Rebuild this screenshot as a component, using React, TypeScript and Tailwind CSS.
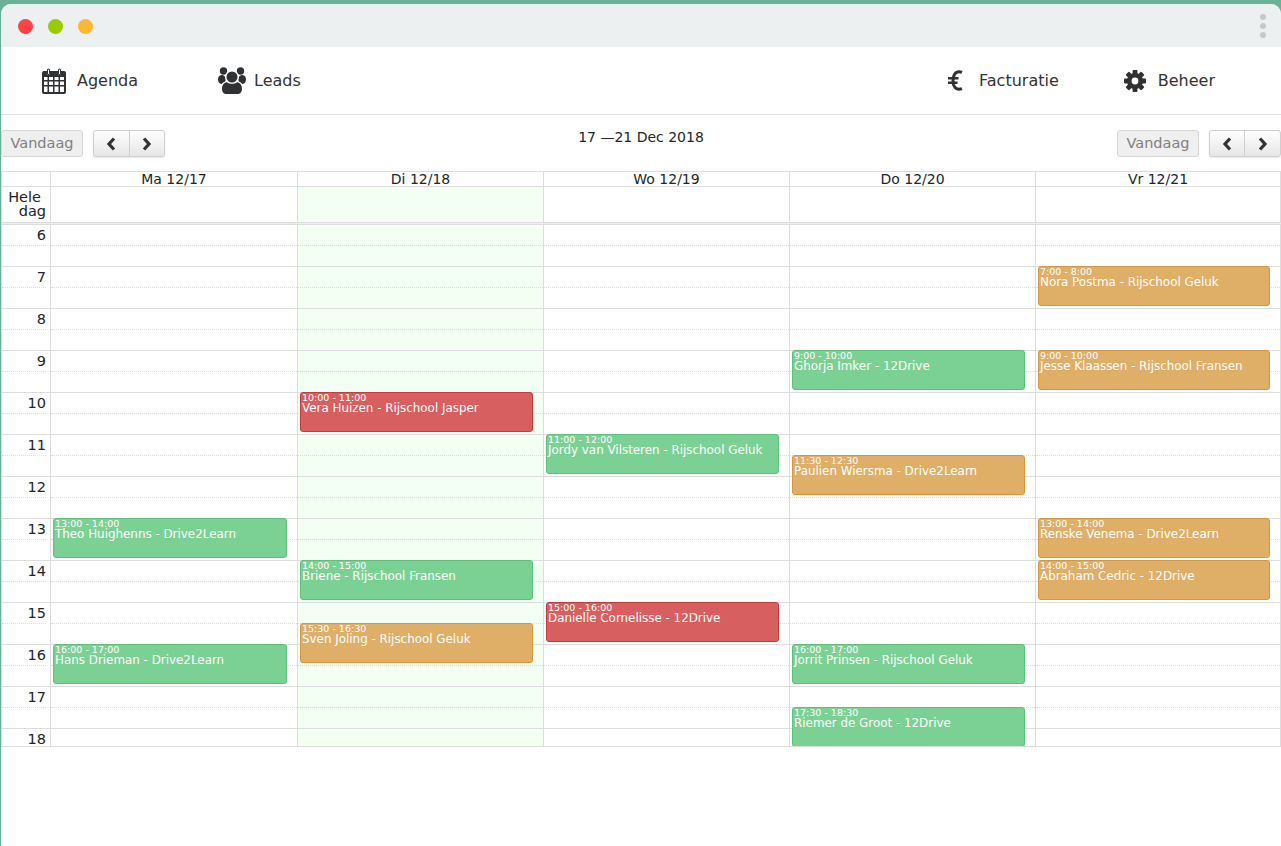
import React from "react";

type CalEvent = { day: number; start: number; time: string; title: string; color: "green" | "red" | "orange" };

const events: CalEvent[] = [
  { day: 0, start: 13, time: "13:00 - 14:00", title: "Theo Huighenns - Drive2Learn", color: "green" },
  { day: 0, start: 16, time: "16:00 - 17:00", title: "Hans Drieman - Drive2Learn", color: "green" },
  { day: 1, start: 10, time: "10:00 - 11:00", title: "Vera Huizen - Rijschool Jasper", color: "red" },
  { day: 1, start: 14, time: "14:00 - 15:00", title: "Briene - Rijschool Fransen", color: "green" },
  { day: 1, start: 15.5, time: "15:30 - 16:30", title: "Sven Joling - Rijschool Geluk", color: "orange" },
  { day: 2, start: 11, time: "11:00 - 12:00", title: "Jordy van Vilsteren - Rijschool Geluk", color: "green" },
  { day: 2, start: 15, time: "15:00 - 16:00", title: "Danielle Cornelisse - 12Drive", color: "red" },
  { day: 3, start: 9, time: "9:00 - 10:00", title: "Ghorja Imker - 12Drive", color: "green" },
  { day: 3, start: 11.5, time: "11:30 - 12:30", title: "Paulien Wiersma - Drive2Learn", color: "orange" },
  { day: 3, start: 16, time: "16:00 - 17:00", title: "Jorrit Prinsen - Rijschool Geluk", color: "green" },
  { day: 3, start: 17.5, time: "17:30 - 18:30", title: "Riemer de Groot - 12Drive", color: "green" },
  { day: 4, start: 7, time: "7:00 - 8:00", title: "Nora Postma - Rijschool Geluk", color: "orange" },
  { day: 4, start: 9, time: "9:00 - 10:00", title: "Jesse Klaassen - Rijschool Fransen", color: "orange" },
  { day: 4, start: 13, time: "13:00 - 14:00", title: "Renske Venema - Drive2Learn", color: "orange" },
  { day: 4, start: 14, time: "14:00 - 15:00", title: "Abraham Cedric - 12Drive", color: "orange" },
];

const colorClasses = {
  green: "bg-[#7bd194] border-[#5cc27b]",
  red: "bg-[#d75f60] border-[#c9393c]",
  orange: "bg-[#dfae67] border-[#d6963a]",
};

const days = [
  { label: "Ma 12/17", width: "w-[247px]" },
  { label: "Di 12/18", width: "w-[246px]", today: true },
  { label: "Wo 12/19", width: "w-[246px]" },
  { label: "Do 12/20", width: "w-[246px]" },
  { label: "Vr 12/21", width: "w-[245px]" },
];

const hours = [6, 7, 8, 9, 10, 11, 12, 13, 14, 15, 16, 17];

const CalendarIcon = () => (
  <svg width="24" height="26" viewBox="0 0 24 26" className="fill-[#2f3133]">
    <path
      fillRule="evenodd"
      d="M2 3h3v2.5a1.5 1.5 0 0 0 3 0V3h8v2.5a1.5 1.5 0 0 0 3 0V3h3a2 2 0 0 1 2 2v19a2 2 0 0 1-2 2H2a2 2 0 0 1-2-2V5a2 2 0 0 1 2-2zM2 9v3h3.5V9zm5 0v3h4V9zm5.5 0v3h4V9zm5.5 0v3h4V9zM2 13.5v3.5h3.5v-3.5zm5 0v3.5h4v-3.5zm5.5 0v3.5h4v-3.5zm5.5 0v3.5h4v-3.5zM2 18.5V24h3.5v-5.500zm5 0V24h4v-5.500zm5.500 0V24h4v-5.500zm5.500 0V24h4v-5.500z"
    />
    <path
      fillRule="evenodd"
      d="M6.500 0.500a1.500 1.500 0 0 1 1.500 1.500v3.500a1.500 1.500 0 0 1-3 0V2a1.500 1.500 0 0 1 1.500-1.500zm11 0a1.500 1.500 0 0 1 1.500 1.500v3.500a1.500 1.500 0 0 1-3 0V2a1.500 1.500 0 0 1 1.500-1.500zM6 2v3.500a.5.5 0 0 0 1 0V2a.5.5 0 0 0-1 0zm11 0v3.500a.5.5 0 0 0 1 0V2a.5.5 0 0 0-1 0z"
    />
  </svg>
);

const UsersIcon = () => (
  <svg width="28" height="27" viewBox="0 0 28 27" className="fill-[#2f3133]">
    <circle cx="5.500" cy="4" r="3.700" />
    <circle cx="22.500" cy="4" r="3.700" />
    <ellipse cx="3.800" cy="12.500" rx="3.800" ry="4.500" />
    <ellipse cx="24.200" cy="12.500" rx="3.800" ry="4.500" />
    <circle cx="14" cy="10" r="6.800" className="fill-white" />
    <circle cx="14" cy="10" r="5.500" />
    <path d="M2.500 22c0-4.800 2.800-7.500 6-7.500 1.500 1.200 3.300 1.800 5.500 1.800s4-.6 5.500-1.800c3.200 0 6 2.700 6 7.500 0 3-2 5-4.500 5H7c-2.500 0-4.500-2-4.500-5z" className="fill-white" />
    <path d="M4 22c0-4.500 2.500-6.800 5-6.800 1.500 1 3 1.600 5 1.600s3.500-.6 5-1.600c2.500 0 5 2.300 5 6.800 0 3-2 5-4.500 5h-11C6 27 4 25 4 22z" />
  </svg>
);

const EuroIcon = () => (
  <svg width="15" height="21" viewBox="0 0 15 21" className="fill-none stroke-[#2f3133]">
    <path d="M14 2.300C13 1.900 12 1.700 11 1.700c-3.600 0-6 3.500-6 8.800s2.400 8.800 6 8.800c1 0 2-.2 3-.6" strokeWidth="3" />
    <path d="M0 8.300h10.500M0 12.700h9.500" strokeWidth="2.400" />
  </svg>
);

const CogIcon = () => (
  <svg width="22" height="22" viewBox="0 0 22 22" className="fill-[#2f3133]">
    {[0, 45, 90, 135, 180, 225, 270, 315].map((a) => (
      <rect key={a} x="8.600" y="0" width="4.800" height="6" rx="0.800" transform={`rotate(${a} 11 11)`} />
    ))}
    <circle cx="11" cy="11" r="8" />
    <circle cx="11" cy="11" r="3.400" className="fill-white" />
  </svg>
);

const Chevron = ({ d }: { d: string }) => (
  <svg width="10" height="14" viewBox="0 0 10 14" className="fill-none stroke-[#333333]">
    <path d={d} strokeWidth="3.200" />
  </svg>
);

const NavItem = ({ icon, label, className }: { icon: React.ReactNode; label: string; className: string }) => (
  <div className={`flex items-center ${className}`}>
    {icon}
    <span className="text-[16px] text-[#333333]">{label}</span>
  </div>
);

const Toolbar = () => (
  <div className="flex items-center gap-[10px]">
    <button className="h-[27px] w-[82px] rounded-[3px] border border-[#d8d8d8] bg-[#efefef] text-[14.5px] text-[#808080]">
      Vandaag
    </button>
    <div className="flex h-[27px] w-[72px] rounded-[3px] border border-[#cfcfcf] bg-gradient-to-b from-[#ffffff] to-[#e6e6e6] shadow-[0_1px_2px_rgba(0,0,0,0.1)]">
      <div className="flex flex-1 items-center justify-center border-r border-[#cfcfcf]">
        <Chevron d="M8 1.500 3 7l5 5.500" />
      </div>
      <div className="flex flex-1 items-center justify-center">
        <Chevron d="M2 1.500 7 7l-5 5.500" />
      </div>
    </div>
  </div>
);

export default function App() {
  return (
    <div className="h-[846px] w-[1281px] overflow-hidden bg-[#6cb197] pt-[4px] pl-[1px] font-['DejaVu_Sans',sans-serif] text-[#212529]">
      <div className="h-full overflow-hidden rounded-t-[10px] bg-white">
        {/* title bar */}
        <div className="flex h-[43px] items-center bg-[#ecf0f1] pl-[17px] pr-[14px]">
          <div className="mt-[1px] flex gap-[15px]">
            <div className="h-[15px] w-[15px] rounded-full bg-[#ff4444]" />
            <div className="h-[15px] w-[15px] rounded-full bg-[#99cc00]" />
            <div className="h-[15px] w-[15px] rounded-full bg-[#ffb733]" />
          </div>
          <div className="ml-auto mr-[1px] flex flex-col gap-[3px]">
            <div className="h-[6px] w-[6px] rounded-full bg-[#c4c8c9]" />
            <div className="h-[6px] w-[6px] rounded-full bg-[#c4c8c9]" />
            <div className="h-[6px] w-[6px] rounded-full bg-[#c4c8c9]" />
          </div>
        </div>

        {/* nav */}
        <div className="flex h-[68px] items-center border-b border-[#e3e3e3]">
          <NavItem className="ml-[41px] gap-[11px]" icon={<CalendarIcon />} label="Agenda" />
          <NavItem className="ml-[80px] gap-[8px]" icon={<UsersIcon />} label="Leads" />
          <NavItem className="ml-auto gap-[16px]" icon={<EuroIcon />} label="Facturatie" />
          <NavItem className="ml-[65px] mr-[66px] gap-[12px]" icon={<CogIcon />} label="Beheer" />
        </div>

        {/* calendar toolbar */}
        <div className="flex h-[56px] items-start justify-between pt-[15px]">
          <Toolbar />
          <div className="mt-[-1px] text-[14px] leading-[16px] text-[#212529]">17 —21 Dec 2018</div>
          <Toolbar />
        </div>

        {/* calendar */}
        <div className="w-[1280px] border-t border-l border-[#dddddd] text-[14px]">
          <div className="flex h-[15px] border-b border-[#dddddd] leading-[15px]">
            <div className="w-[49px] shrink-0 border-r border-[#dddddd]" />
            {days.map((d) => (
              <div key={d.label} className={`${d.width} shrink-0 border-r border-[#dddddd] text-center`}>
                {d.label}
              </div>
            ))}
          </div>
          <div className="flex h-[35px] leading-[14px]">
            <div className="w-[49px] shrink-0 border-r border-[#dddddd] pt-[3px] pr-[4px] text-right text-[14.5px]">
              <span className="pr-[5px]">Hele</span>
              <br />
              dag
            </div>
            {days.map((d) => (
              <div
                key={d.label}
                className={`${d.width} shrink-0 border-r border-[#dddddd] ${d.today ? "bg-[#f3fff2]" : ""}`}
              />
            ))}
          </div>
          <div className="h-[3px] border-y border-[#dddddd] bg-[#eeeeee]" />
          <div className="flex h-[522px] overflow-hidden border-b border-[#dddddd]">
            <div className="w-[49px] shrink-0 border-r border-[#dddddd]">
              {hours.map((h) => (
                <div key={h} className="h-[42px] border-b border-[#dddddd] pr-[4px] text-right text-[14.500px] leading-[21px]">
                  <div className="h-[21px] border-b border-dotted border-[#dddddd]">{h}</div>
                </div>
              ))}
              <div className="pr-[4px] text-right text-[14.500px] leading-[21px]">18</div>
            </div>
            {days.map((d, i) => (
              <div
                key={d.label}
                className={`relative ${d.width} shrink-0 border-r border-[#dddddd] ${d.today ? "bg-[#f3fff2]" : ""}`}
              >
                {hours.map((h) => (
                  <div key={h} className="h-[42px] border-b border-[#dddddd]">
                    <div className="h-[21px] border-b border-dotted border-[#dddddd]" />
                  </div>
                ))}
                {events
                  .filter((e) => e.day === i)
                  .map((e) => (
                    <div
                      key={e.time}
                      style={{ top: (e.start - 6) * 42 - 1 }}
                      className={`absolute left-[2px] right-[10px] h-[40px] overflow-hidden rounded-[3px] border pl-[1px] text-white ${colorClasses[e.color]}`}
                    >
                      <div className="text-[9.500px] leading-[9px]">{e.time}</div>
                      <div className="text-[11.900px] leading-[12px] whitespace-nowrap">{e.title}</div>
                    </div>
                  ))}
              </div>
            ))}
          </div>
        </div>
      </div>
    </div>
  );
}
